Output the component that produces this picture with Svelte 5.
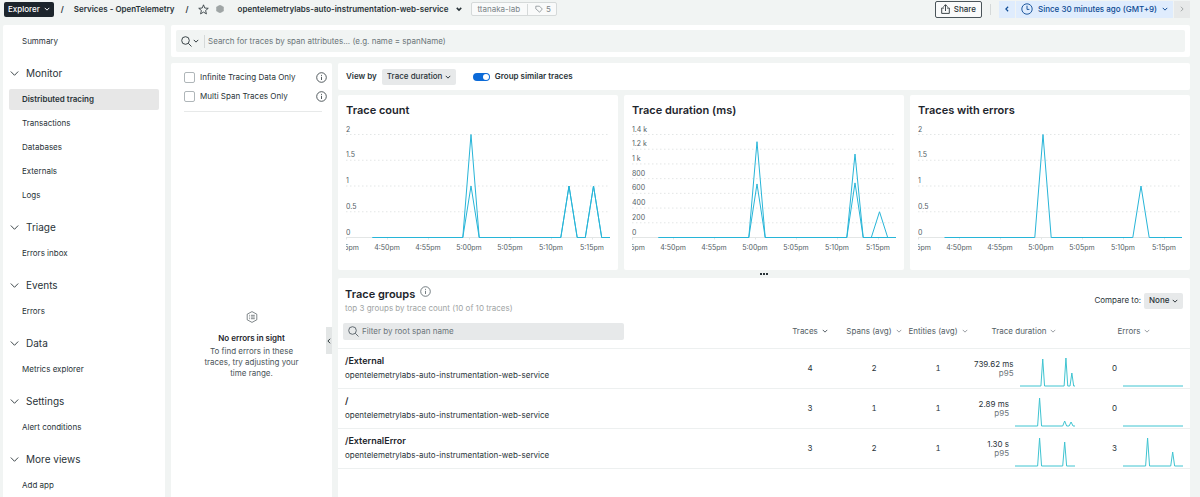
<script>
	const sections = [
		{ title: 'Monitor', items: ['Distributed tracing', 'Transactions', 'Databases', 'Externals', 'Logs'] },
		{ title: 'Triage', items: ['Errors inbox'] },
		{ title: 'Events', items: ['Errors'] },
		{ title: 'Data', items: ['Metrics explorer'] },
		{ title: 'Settings', items: ['Alert conditions'] },
		{ title: 'More views', items: ['Add app'] }
	];

	// Plot area inside the 264x142 chart viewBox
	const TOP = 14.5;
	const BASE = 117.5;
	const START = 26.5;
	const END = 264;
	const HALF = 8.2;

	const timeTicks = ['4:45pm', '4:50pm', '4:55pm', '5:00pm', '5:05pm', '5:10pm', '5:15pm'];

	// peaks are [x, share of the full height]
	const charts = [
		{
			title: 'Trace count',
			labels: ['2', '1.5', '1', '0.5', '0'],
			series: [
				[[125, 1], [223, 0.5], [247.5, 0.5]],
				[[125, 0.5], [223, 0.5], [247.5, 0.5]]
			]
		},
		{
			title: 'Trace duration (ms)',
			labels: ['1.4 k', '1.2 k', '1 k', '800', '600', '400', '200', '0'],
			series: [
				[[125, 0.93], [223, 0.81]],
				[[125, 0.52], [223, 0.53], [247.5, 0.25]]
			]
		},
		{
			title: 'Traces with errors',
			labels: ['2', '1.5', '1', '0.5', '0'],
			series: [[[125, 1], [223, 0.5]]]
		}
	];

	const service = 'opentelemetrylabs-auto-instrumentation-web-service';

	const columns = ['Traces', 'Spans (avg)', 'Entities (avg)', 'Trace duration', 'Errors'];
	let sortBy = $state('Traces');

	const groups = [
		{ name: '/External', traces: 4, spans: 2, entities: 1, duration: '739.62 ms', trend: [[25, 27], [50.5, 28], [57, 13]], errors: 0, errorTrend: [] },
		{ name: '/', traces: 3, spans: 1, entities: 1, duration: '2.89 ms', trend: [[25, 28], [50.5, 5], [57, 4]], errors: 0, errorTrend: [] },
		{ name: '/ExternalError', traces: 3, spans: 2, entities: 1, duration: '1.30 s', trend: [[25, 28], [50.5, 24]], errors: 3, errorTrend: [[25, 28], [50.5, 14]] }
	];

	let selected = $state('Distributed tracing');
	let query = $state('');
	let filter = $state('');
	let grouped = $state(true);
	let shown = $derived(groups.filter((g) => g.name.toLowerCase().includes(filter.toLowerCase())));

	function chartLine(peaks) {
		let d = `M${START} ${BASE}`;
		for (const [x, h] of peaks) {
			d += `L${x - HALF} ${BASE}L${x} ${BASE - h * (BASE - TOP)}L${x + HALF} ${BASE}`;
		}
		return d + `L${END} ${BASE}`;
	}

	function sparkLine(peaks) {
		let d = 'M0 29';
		for (const [x, h] of peaks) {
			d += `L${x - 2} 29L${x} ${29 - h}L${x + 2} 29`;
		}
		return d + 'L61 29';
	}
</script>

{#snippet chevron(size = 6)}
	<svg width={size} height={size} viewBox="0 0 8 8" fill="none" stroke="currentColor" stroke-width="1.3"><path d="M1 2.5l3 3 3-3" /></svg>
{/snippet}

{#snippet info()}
	<svg width="11" height="11" viewBox="0 0 11 11" fill="none" stroke="currentColor" stroke-width="0.8">
		<circle cx="5.5" cy="5.5" r="4.8" />
		<path d="M5.5 4.8v3.2M5.5 2.9v1" />
	</svg>
{/snippet}

{#snippet magnifier()}
	<svg width="11" height="11" viewBox="0 0 11 11" fill="none" stroke="currentColor" stroke-width="0.9">
		<circle cx="4.5" cy="4.5" r="3.8" />
		<path d="M7.3 7.3l3.2 3.2" />
	</svg>
{/snippet}

{#snippet spark(peaks)}
	<svg class="spark" viewBox="0 0 61 30" preserveAspectRatio="none" aria-hidden="true">
		<path d={sparkLine(peaks)} vector-effect="non-scaling-stroke" />
	</svg>
{/snippet}

<div class="page">
	<header class="topbar">
		<button class="explorer">Explorer {@render chevron()}</button>
		<span class="slash">/</span>
		<a class="crumb" href="#services">Services - OpenTelemetry</a>
		<span class="slash">/</span>
		<button class="icon-btn" aria-label="Favorite">
			<svg width="11" height="11" viewBox="0 0 12 12" fill="none" stroke="currentColor" stroke-width="0.9" stroke-linejoin="round"><path d="M6 .9l1.4 3.5 3.8.3-2.9 2.4.9 3.7L6 8.8l-3.2 2 .9-3.7L.8 4.7l3.8-.3z" /></svg>
		</button>
		<svg class="health" width="8" height="8" viewBox="0 0 8 8"><path d="M4 0l3.6 2v4L4 8 .4 6V2z" fill="#9fa5a5" stroke="#9fa5a5" stroke-linejoin="round" stroke-width=".4" /></svg>
		<button class="entity">
			{service}
			<svg width="6" height="6" viewBox="0 0 8 8" fill="none" stroke="currentColor" stroke-width="2"><path d="M1 2.5l3 3 3-3" /></svg>
		</button>
		<div class="tags">
			<span>ttanaka-lab</span>
			<button class="tag-count">
				<svg width="8" height="8" viewBox="0 0 8 8" fill="none" stroke="currentColor" stroke-width="0.7" stroke-linejoin="round"><path d="M.8 1.2h3.7L7.3 4 4.6 7.2 .8 3.8z" /></svg>
				5
			</button>
		</div>
		<div class="spacer"></div>
		<button class="share">
			<svg width="9" height="10" viewBox="0 0 9 10" fill="none" stroke="currentColor" stroke-width="0.9"><path d="M3 4H.7v5.4h7.6V4H6M4.5 7V.8M2.5 2.7l2-2 2 2" /></svg>
			Share
		</button>
		<span class="bar"></span>
		<div class="time">
			<button class="step" aria-label="Previous"><svg width="6" height="6" viewBox="0 0 8 8" fill="none" stroke="currentColor" stroke-width="1.5"><path d="M5.5 1l-3 3 3 3" /></svg></button>
			<button class="range">
				<svg width="12" height="12" viewBox="0 0 12 12" fill="none" stroke="currentColor" stroke-width="0.9"><circle cx="6" cy="6" r="5.2" /><path d="M6 2.7V6.4h2.4" /></svg>
				<span>Since 30 minutes ago (GMT+9)</span>
				{@render chevron()}
			</button>
			<button class="step next" aria-label="Next" disabled><svg width="6" height="6" viewBox="0 0 8 8" fill="none" stroke="currentColor" stroke-width="1.3"><path d="M2.5 1l3 3-3 3" /></svg></button>
		</div>
	</header>

	<div class="body">
		<nav class="sidebar">
			<a href="#summary">Summary</a>
			{#each sections as section}
				<button class="section">
					<svg width="9" height="9" viewBox="0 0 9 9" fill="none" stroke="currentColor" stroke-width="0.9"><path d="M.8 2.5l3.7 3.8 3.7-3.8" /></svg>
					{section.title}
				</button>
				{#each section.items as item}
					<a href="#{item}" class:active={item === selected} onclick={() => (selected = item)}>{item}</a>
				{/each}
			{/each}
		</nav>

		<div class="content">
			<div class="card search">
				<div class="search-box">
					<button class="mode" aria-label="Search mode">{@render magnifier()}{@render chevron()}</button>
					<input type="text" aria-label="Search traces" placeholder="Search for traces by span attributes... (e.g. name = spanName)" bind:value={query} />
				</div>
			</div>

			<div class="columns">
				<aside class="card filters">
					<div class="checks">
						<div class="check">
							<label><input type="checkbox" />Infinite Tracing Data Only</label>
							{@render info()}
						</div>
						<div class="check">
							<label><input type="checkbox" />Multi Span Traces Only</label>
							{@render info()}
						</div>
					</div>
					<div class="empty">
						<svg width="12" height="12" viewBox="0 0 12 12" fill="none" stroke="currentColor" stroke-width="0.7"><path d="M6 .6l4.8 2.6v5.6L6 11.4 1.2 8.8V3.2zM5 4.3h3.8M5 6h3.8M5 7.7h3.8M3.2 4.3h.9M3.2 6h.9M3.2 7.7h.9" /></svg>
						<h3>No errors in sight</h3>
						<p>To find errors in these traces, try adjusting your time range.</p>
					</div>
					<button class="collapse" aria-label="Collapse filters"><svg width="6" height="6" viewBox="0 0 8 8" fill="none" stroke="currentColor" stroke-width="1.3"><path d="M5.5 1l-3 3 3 3" /></svg></button>
				</aside>

				<main>
					<div class="card toolbar">
						<label for="view">View by</label>
						<span class="select">
							<select id="view"><option>Trace duration</option></select>
							{@render chevron()}
						</span>
						<label class="toggle"><input type="checkbox" role="switch" bind:checked={grouped} />Group similar traces</label>
					</div>

					<div class="charts">
						{#each charts as chart}
							<section class="card chart">
								<h2>{chart.title}</h2>
								<svg viewBox="0 0 264 142" role="img" aria-label={chart.title}>
									{#each chart.labels as label, i}
										{@const y = TOP + (i * (BASE - TOP)) / (chart.labels.length - 1)}
										<path class={i === chart.labels.length - 1 ? 'axis' : 'grid'} d="M0 {y}H264" />
										<text x="0" y={y - 3}>{label}</text>
									{/each}
									{#each timeTicks as tick, i}
										<path class="axis" d="M{0.5 + i * 41} {BASE}v2" />
										<text x={i * 41} y="130" text-anchor="middle">{tick}</text>
									{/each}
									{#each chart.series as peaks}
										<path class="line" d={chartLine(peaks)} />
									{/each}
								</svg>
							</section>
						{/each}
					</div>

					<div class="grip"><i></i><i></i><i></i></div>

					<section class="card groups">
						<div class="groups-head">
							<div>
								<h2>Trace groups {@render info()}</h2>
								<p>top 3 groups by trace count (10 of 10 traces)</p>
							</div>
							<div class="compare">
								<label for="compare">Compare to:</label>
								<span class="select">
									<select id="compare"><option>None</option></select>
									{@render chevron()}
								</span>
							</div>
						</div>
						<table>
							<colgroup>
								<col />
								<col class="num" />
								<col class="num" />
								<col class="num" />
								<col class="duration" />
								<col class="errors" />
							</colgroup>
							<thead>
								<tr>
									<th>
										<div class="filter">
											{@render magnifier()}
											<input type="text" aria-label="Filter by root span name" placeholder="Filter by root span name" bind:value={filter} />
										</div>
									</th>
									{#each columns as column}
										<th><button class="sort" class:sorted={column === sortBy} onclick={() => (sortBy = column)}>{column} {@render chevron()}</button></th>
									{/each}
								</tr>
							</thead>
							<tbody>
								{#each shown as group (group.name)}
									<tr>
										<td class="name">
											<strong>{group.name}</strong>
											<span>{service}</span>
										</td>
										<td class="count">{group.traces}</td>
										<td class="count">{group.spans}</td>
										<td class="count">{group.entities}</td>
										<td>
											<div class="metric">
												<div class="value">{group.duration}<small>p95</small></div>
												{@render spark(group.trend)}
											</div>
										</td>
										<td class="last">
											<div class="metric">
												<div class="value">{group.errors}</div>
												{@render spark(group.errorTrend)}
											</div>
										</td>
									</tr>
								{/each}
							</tbody>
						</table>
					</section>
				</main>
			</div>
		</div>
	</div>
</div>

<style>
	:global(body) {
		margin: 0;
		background: #f1f4f3;
		color: #293338;
		font-family: Inter, 'Liberation Sans', sans-serif;
		font-size: 8px;
		line-height: 11px;
	}

	* {
		box-sizing: border-box;
	}

	button,
	input,
	select {
		font: inherit;
		color: inherit;
		margin: 0;
		padding: 0;
		border: none;
		background: none;
	}

	button {
		display: flex;
		align-items: center;
		white-space: nowrap;
		cursor: pointer;
	}

	a {
		color: inherit;
		text-decoration: none;
	}

	svg {
		flex: none;
	}

	h2,
	h3,
	p {
		margin: 0;
	}

	h2 {
		font-size: 11px;
		line-height: 14px;
		font-weight: 600;
		color: #1d252c;
	}

	.page {
		min-height: 100vh;
		display: flex;
		flex-direction: column;
		padding: 0 10px 0 3px;
	}

	.card {
		background: #fff;
		border-radius: 2px;
	}

	.topbar {
		display: flex;
		align-items: center;
		height: 18px;
		margin-bottom: 7px;
		padding-left: 1px;
		font-weight: 600;
	}

	.explorer {
		gap: 4px;
		height: 15px;
		padding: 0 4px;
		border-radius: 2px;
		background: #1d252c;
		color: #fff;
		font-weight: 500;
	}

	.slash {
		width: 20px;
		padding-left: 7px;
	}

	.crumb {
		margin-right: 4px;
		white-space: nowrap;
	}

	.icon-btn {
		margin-left: -1px;
	}

	.health {
		margin: 0 14px 0 7px;
	}

	.entity {
		gap: 8px;
	}

	.tags {
		display: flex;
		align-items: center;
		height: 14px;
		margin-left: 9px;
		padding: 0 5px;
		border: 1px solid #d5d9d9;
		border-radius: 2px;
		background: #f9fafa;
		color: #7a8387;
		font-weight: 400;
	}

	.tag-count {
		gap: 3px;
		margin-left: 7px;
		padding-left: 7px;
		border-left: 1px solid #d5d9d9;
	}

	.spacer {
		flex: 1;
	}

	.share {
		gap: 4px;
		height: 17px;
		padding: 0 5px;
		border: 1px solid #4a5459;
		border-radius: 2px;
		background: #f9fafa;
		font-weight: 500;
	}

	.bar {
		width: 1px;
		height: 11px;
		margin: 0 8px;
		background: #d5d9d9;
	}

	.time {
		display: flex;
		height: 17px;
		gap: 1px;
		color: #0c4a94;
		font-weight: 500;
	}

	.time button {
		background: #dfecfd;
	}

	.time .step {
		width: 16px;
		justify-content: center;
	}

	.time .next {
		background: #e7e9e9;
		color: #9fa5a5;
	}

	.range {
		gap: 5px;
		padding: 0 5px;
	}

	.body {
		flex: 1;
		display: flex;
		gap: 6px;
	}

	.sidebar {
		flex: none;
		display: flex;
		flex-direction: column;
		width: 162px;
		padding: 6px 6px 0;
		background: #fff;
		border-radius: 2px;
	}

	.sidebar a {
		margin-bottom: 3px;
		padding: 5px 13px;
		border-radius: 2px;
	}

	.sidebar a.active {
		background: #e7e7e7;
		font-weight: 600;
	}

	.section {
		gap: 7px;
		height: 24px;
		margin: 6px 0 4px;
		padding-left: 1px;
		font-size: 10px;
		text-align: left;
	}

	.content {
		flex: 1;
		min-width: 0;
		display: flex;
		flex-direction: column;
		gap: 6px;
	}

	.search {
		padding: 5px 5px;
	}

	.search-box {
		display: flex;
		align-items: center;
		height: 22px;
		padding: 0 5px;
		background: #f1f4f3;
		border-radius: 2px;
	}

	.mode {
		gap: 1px;
		height: 13px;
		margin-right: 3px;
		padding-right: 5px;
		border-right: 1px solid #d5d9d9;
	}

	.search-box input {
		flex: 1;
	}

	input::placeholder {
		color: #6b7479;
		opacity: 1;
	}

	.columns {
		flex: 1;
		display: flex;
		gap: 6px;
	}

	.filters {
		position: relative;
		flex: none;
		width: 161px;
	}

	.checks {
		margin: 0 10px 0 13px;
		padding: 5px 0;
		border-bottom: 1px solid #e7e9e9;
	}

	.check {
		display: flex;
		align-items: center;
		justify-content: space-between;
		height: 19px;
		margin-right: -5px;
	}

	.check label {
		display: flex;
		align-items: center;
		gap: 5px;
	}

	.check input {
		appearance: none;
		width: 11px;
		height: 11px;
		border: 1px solid #afb6b9;
		border-radius: 2px;
	}

	.check input:checked {
		background: #0b6ad8;
	}

	.empty {
		padding: 199px 28px 0;
		text-align: center;
		color: #4a5459;
	}

	.empty h3 {
		margin: 7px 0 2px;
		font-size: 8px;
		font-weight: 600;
		color: #1d252c;
	}

	.collapse {
		position: absolute;
		top: 264px;
		right: 0;
		width: 6px;
		height: 27px;
		background: #e3e6e6;
	}

	main {
		flex: 1;
		min-width: 0;
		display: flex;
		flex-direction: column;
	}

	.toolbar {
		display: flex;
		align-items: center;
		height: 27px;
		margin-bottom: 5px;
		padding: 0 8px;
		font-weight: 600;
	}

	.select {
		position: relative;
		display: inline-flex;
		align-items: center;
		color: #293338;
		font-weight: 500;
	}

	.select select {
		appearance: none;
		height: 16px;
		padding: 0 13px 0 5px;
		border-radius: 2px;
		background: #e7e9ea;
	}

	.select svg {
		position: absolute;
		right: 5px;
		pointer-events: none;
	}

	.toolbar .select {
		margin-left: 5px;
	}

	.toggle {
		display: flex;
		align-items: center;
		gap: 5px;
		margin-left: 17px;
	}

	.toggle input {
		appearance: none;
		display: flex;
		width: 17px;
		height: 8px;
		padding: 1px;
		border-radius: 4px;
		background: #9fa5a5;
	}

	.toggle input::before {
		content: '';
		width: 6px;
		height: 6px;
		border-radius: 50%;
		background: #fff;
	}

	.toggle input:checked {
		justify-content: flex-end;
		background: #0b6ad8;
	}

	.charts {
		display: grid;
		grid-template-columns: repeat(3, 1fr);
		gap: 6px;
	}

	.chart {
		padding: 8px;
	}

	.chart svg {
		display: block;
		width: 100%;
		margin-top: 3px;
	}

	.chart text {
		font-size: 7px;
		fill: #535e65;
	}

	.chart path {
		fill: none;
	}

	.grid {
		stroke: #e3e6e6;
		stroke-dasharray: 1.5 2.5;
	}

	.axis {
		stroke: #e3e6e6;
	}

	.line {
		stroke: #27b5d8;
	}

	.grip {
		display: flex;
		align-items: center;
		justify-content: center;
		gap: 1px;
		height: 8px;
	}

	.grip i {
		width: 2px;
		height: 2px;
		background: #293338;
	}

	.groups {
		flex: 1;
		padding-top: 8px;
	}

	.groups-head {
		display: flex;
		justify-content: space-between;
		align-items: center;
		padding: 0 7px;
	}

	.groups-head h2 {
		display: flex;
		gap: 5px;
		line-height: 16px;
	}

	.groups-head h2 svg {
		color: #535e65;
	}

	.groups-head p {
		line-height: 13px;
		color: #9fa5a5;
	}

	.compare {
		display: flex;
		align-items: center;
		gap: 3px;
	}

	table {
		width: 100%;
		table-layout: fixed;
		border-collapse: collapse;
	}

	.num {
		width: 64px;
	}

	.duration {
		width: 108px;
	}

	.errors {
		width: 112px;
	}

	tr {
		border-bottom: 1px solid #edf0f0;
	}

	th {
		height: 33px;
		padding: 0;
		font-weight: 400;
		color: #535e65;
	}

	.filter {
		display: flex;
		align-items: center;
		gap: 3px;
		width: 281px;
		height: 17px;
		margin-left: 5px;
		padding: 0 5px;
		border-radius: 2px;
		background: #e7e9ea;
	}

	.filter input {
		flex: 1;
	}

	.sort {
		gap: 4px;
		margin: 0 auto;
	}

	.sort svg {
		opacity: 0.6;
	}

	.sort.sorted svg {
		opacity: 1;
	}

	td {
		height: 40px;
		padding: 0;
	}

	td.name {
		padding-left: 7px;
	}

	.name strong,
	.name span {
		display: block;
	}

	.name strong {
		margin-bottom: 3px;
		font-size: 9px;
		line-height: 12px;
		font-weight: 600;
		color: #1d252c;
	}

	.count {
		text-align: center;
		font-variant-numeric: tabular-nums;
	}

	.metric {
		display: flex;
		align-items: center;
		gap: 6px;
		height: 38px;
		padding: 0 3px 0 4px;
	}

	.last .metric {
		padding-right: 7px;
	}

	.value {
		min-width: 35px;
		text-align: right;
		line-height: 10px;
		white-space: nowrap;
	}

	.value small {
		display: block;
		font-size: 8px;
		line-height: 9px;
		color: #6b7479;
	}

	.spark {
		flex: 1;
		align-self: flex-end;
		min-width: 0;
		height: 30px;
	}

	.spark path {
		fill: none;
		stroke: #3fc4d1;
	}
</style>
